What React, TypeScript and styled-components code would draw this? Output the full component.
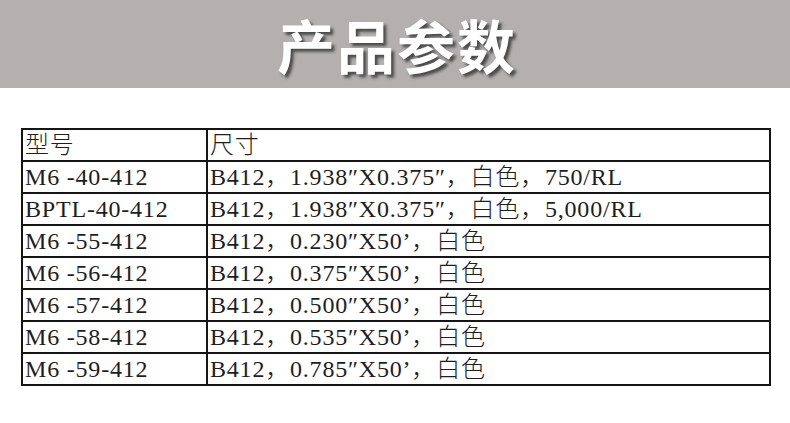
import React from 'react';
import styled, { createGlobalStyle } from 'styled-components';

const GlobalStyle = createGlobalStyle`
  html, body {
    margin: 0;
    padding: 0;
    background: #ffffff;
  }
`;

const rows = [
  { model: 'M6 -40-412', size: 'B412，1.938″X0.375″，白色，750/RL' },
  { model: 'BPTL-40-412', size: 'B412，1.938″X0.375″，白色，5,000/RL' },
  { model: 'M6 -55-412', size: 'B412，0.230″X50’，白色' },
  { model: 'M6 -56-412', size: 'B412，0.375″X50’，白色' },
  { model: 'M6 -57-412', size: 'B412，0.500″X50’，白色' },
  { model: 'M6 -58-412', size: 'B412，0.535″X50’，白色' },
  { model: 'M6 -59-412', size: 'B412，0.785″X50’，白色' },
];

const Page = styled.div`
  width: 790px;
  height: 423px;
  overflow: hidden;
  background: #ffffff;
`;

const Banner = styled.header`
  height: 88px;
  background: #b3b0af;
  display: flex;
  align-items: center;
  justify-content: center;
`;

const Title = styled.h1`
  margin: 0;
  padding-left: 4px;
  font-family: 'Noto Sans CJK SC', 'Noto Sans', sans-serif;
  font-weight: 700;
  font-size: 58px;
  letter-spacing: 2px;
  color: #ffffff;
  text-shadow: 3px 3px 3px rgba(40, 40, 40, 0.75);
`;

const Body = styled.section`
  padding: 40px 0 0 21px;
`;

const Table = styled.table`
  width: 748px;
  border-collapse: collapse;
  table-layout: fixed;
  font-family: 'Liberation Serif', 'Noto Sans CJK SC', serif;
  font-weight: 300;
  font-size: 24px;
  color: #1e1e1e;
`;

const Col = styled.col<{ $w: number }>`
  width: ${p => p.$w}px;
`;

const Cell = styled.td`
  height: 30px;
  border: 2px solid #151515;
  padding: 0 0 0 2px;
  line-height: 30px;
  letter-spacing: 0.8px;
  white-space: nowrap;
  vertical-align: bottom;
  overflow: hidden;
`;

export default function App() {
  return (
    <Page>
      <GlobalStyle />
      <Banner>
        <Title>产品参数</Title>
      </Banner>
      <Body>
        <Table>
          <colgroup>
            <Col $w={185} />
            <Col $w={563} />
          </colgroup>
          <tbody>
            <tr>
              <Cell>型号</Cell>
              <Cell>尺寸</Cell>
            </tr>
            {rows.map(r => (
              <tr key={r.model}>
                <Cell>{r.model}</Cell>
                <Cell>{r.size}</Cell>
              </tr>
            ))}
          </tbody>
        </Table>
      </Body>
    </Page>
  );
}
